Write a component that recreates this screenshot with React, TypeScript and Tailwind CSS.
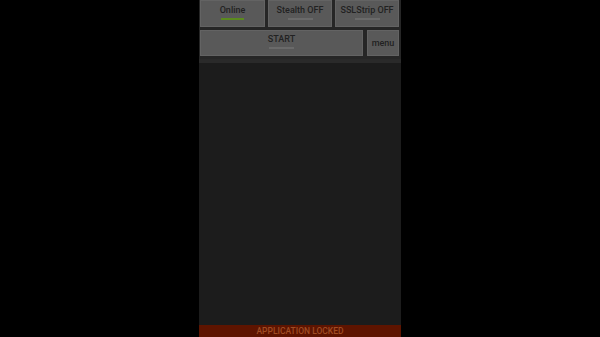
export default function App() {
  const font = { fontFamily: '"Roboto", "Liberation Sans", sans-serif' };
  return (
    <div className="w-[600px] h-[337px] bg-black flex justify-center overflow-hidden" style={font}>
      <div className="w-[202px] h-full flex flex-col bg-[#1c1c1c]">
        <div className="bg-[#262626] pl-[1px] pr-[2px] flex flex-col gap-[3px]">
          <div className="grid grid-cols-[65px_64px_64px] gap-[3px] h-[27px]">
            <div className="bg-[#595959] border border-[#636363] flex flex-col items-center pt-[4px]">
              <span className="text-[9px] leading-[11px] font-medium text-[#222222]">Online</span>
              <div className="mt-[2px] w-[23px] h-[2px] bg-[#5b8a1e]" />
            </div>
            <div className="bg-[#595959] border border-[#636363] flex flex-col items-center pt-[4px]">
              <span className="text-[9px] leading-[11px] font-medium text-[#222222]">Stealth OFF</span>
              <div className="mt-[2px] w-[25px] h-[2px] bg-[#6a6a6a]" />
            </div>
            <div className="bg-[#595959] border border-[#636363] flex flex-col items-center pt-[4px]">
              <span className="text-[9px] leading-[11px] font-medium text-[#222222]">SSLStrip OFF</span>
              <div className="mt-[2px] w-[25px] h-[2px] bg-[#6a6a6a]" />
            </div>
          </div>
          <div className="grid grid-cols-[163px_32px] gap-[4px] h-[26px]">
            <div className="bg-[#595959] border border-[#636363] flex flex-col items-center pt-[3px]">
              <span className="text-[9px] leading-[11px] font-medium text-[#222222]">START</span>
              <div className="mt-[2px] w-[25px] h-[2px] bg-[#6a6a6a]" />
            </div>
            <div className="bg-[#595959] border border-[#636363] flex items-center justify-center">
              <span className="text-[9px] leading-[11px] font-medium text-[#222222]">menu</span>
            </div>
          </div>
          <div className="h-[4px] -ml-[1px] -mr-[2px] bg-[#2a2a2a]" />
        </div>
        <div className="flex-1" />
        <div className="h-[12px] bg-[#5e1400] flex items-center justify-center">
          <span className="text-[8.5px] leading-[10px] font-medium text-[#a04c24]">APPLICATION LOCKED</span>
        </div>
      </div>
    </div>
  );
}
